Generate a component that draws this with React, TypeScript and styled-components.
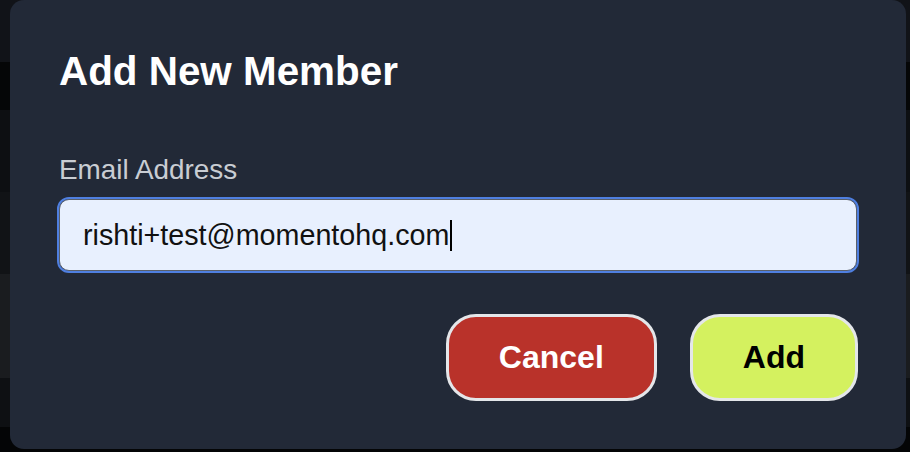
import React from "react";
import styled, { createGlobalStyle } from "styled-components";

const GlobalStyle = createGlobalStyle`
  html, body {
    margin: 0;
    padding: 0;
    width: 910px;
    height: 452px;
    overflow: hidden;
    background: #050607;
    font-family: "Liberation Sans", Arial, Helvetica, sans-serif;
  }
`;

const rows = [
  { h: 62, bg: "#111318" },
  { h: 48, bg: "#050607" },
  { h: 82, bg: "#0d0f12" },
  { h: 82, bg: "#111316" },
  { h: 104, bg: "#1a1c1f" },
  { h: 49, bg: "#0e1013" },
  { h: 25, bg: "#040506" },
];

export default function App() {
  return (
    <>
      <GlobalStyle />
      <Page>
        <Backdrop>
          {rows.map((r, i) => (
            <BackdropRow key={i} $h={r.h} $bg={r.bg} />
          ))}
        </Backdrop>
        <Modal role="dialog" aria-labelledby="add-member-title">
          <Title id="add-member-title">Add New Member</Title>
          <Label htmlFor="email">Email Address</Label>
          <Field id="email" role="textbox" tabIndex={0}>
            <Value>rishti+test@momentohq.com</Value>
            <Caret />
          </Field>
          <Actions>
            <Button $variant="danger">Cancel</Button>
            <Button $variant="primary">Add</Button>
          </Actions>
        </Modal>
      </Page>
    </>
  );
}

const Page = styled.div`
  position: relative;
  width: 910px;
  height: 452px;
  overflow: hidden;
`;

const Backdrop = styled.div`
  display: flex;
  flex-direction: column;
  height: 100%;
`;

const BackdropRow = styled.div<{ $h: number; $bg: string }>`
  height: ${(p) => p.$h}px;
  flex-shrink: 0;
  background: ${(p) => p.$bg};
`;

const Modal = styled.div`
  position: absolute;
  top: 0;
  left: 10px;
  width: 896px;
  height: 449px;
  box-sizing: border-box;
  padding: 48px 49px 48px;
  background: #222937;
  border-radius: 14px;
  display: flex;
  flex-direction: column;
`;

const Title = styled.h2`
  margin: 0;
  font-size: 40.4px;
  line-height: 46px;
  font-weight: 700;
  color: #ffffff;
`;

const Label = styled.label`
  margin-top: 60px;
  font-size: 27.9px;
  line-height: 31px;
  color: #c9cdd3;
`;

const Field = styled.div`
  margin-top: 14px;
  height: 72px;
  box-sizing: border-box;
  display: flex;
  align-items: center;
  padding: 0 23px;
  background: #e8f0fe;
  border: 1px solid #5b606a;
  border-radius: 10px;
  outline: 2px solid #4f7fe0;
  outline-offset: 0;
  font-size: 28.7px;
  color: #111111;
`;

const Value = styled.span`
  white-space: nowrap;
`;

const Caret = styled.span`
  width: 2px;
  height: 31px;
  margin-left: 1px;
  background: #000000;
`;

const Actions = styled.div`
  margin-top: 43px;
  margin-right: -1px;
  display: flex;
  justify-content: flex-end;
  gap: 33px;
`;

const Button = styled.button<{ $variant: "danger" | "primary" }>`
  height: 87px;
  padding: 0 50px;
  box-sizing: border-box;
  border: 3px solid #e4e6e9;
  border-radius: 30px;
  font-family: "Liberation Sans", Arial, Helvetica, sans-serif;
  font-size: 32px;
  font-weight: 700;
  cursor: pointer;
  background: ${(p) => (p.$variant === "danger" ? "#b9322a" : "#d4f15f")};
  color: ${(p) => (p.$variant === "danger" ? "#ffffff" : "#000000")};
`;
